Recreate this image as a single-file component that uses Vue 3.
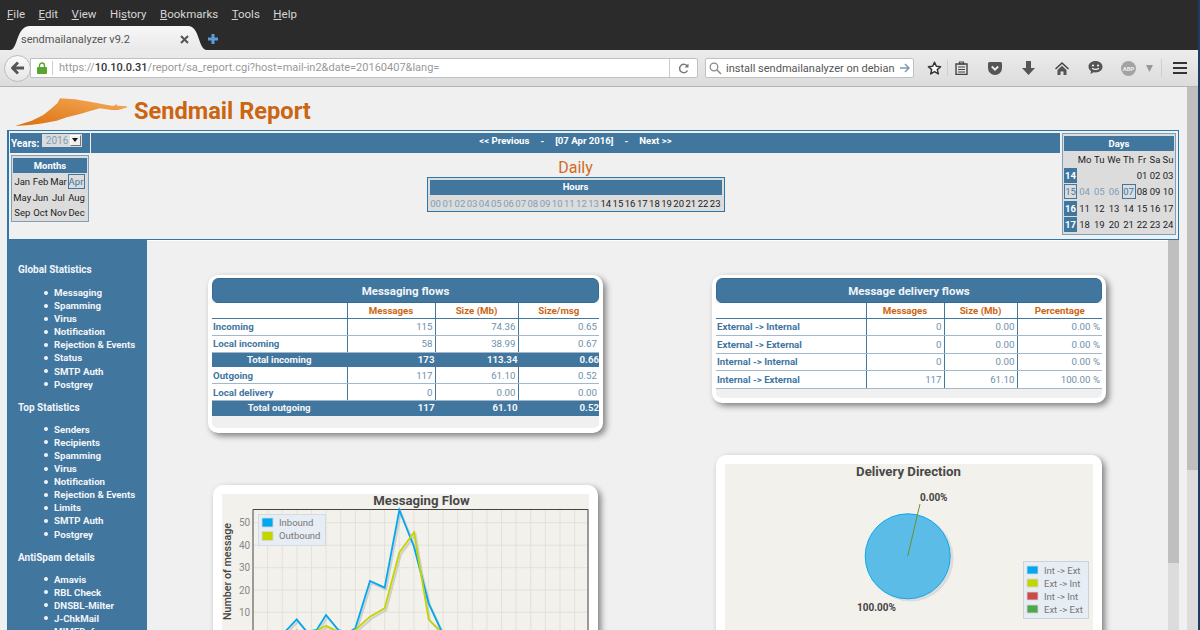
<script setup>
const menus = [
  { b: '', u: 'F', a: 'ile' }, { b: '', u: 'E', a: 'dit' }, { b: '', u: 'V', a: 'iew' },
  { b: 'Hi', u: 's', a: 'tory' }, { b: '', u: 'B', a: 'ookmarks' }, { b: '', u: 'T', a: 'ools' }, { b: '', u: 'H', a: 'elp' }
]
const months = ['Jan', 'Feb', 'Mar', 'Apr', 'May', 'Jun', 'Jul', 'Aug', 'Sep', 'Oct', 'Nov', 'Dec']
const hours = Array.from({ length: 24 }, (_, i) => ({ t: String(i).padStart(2, '0'), link: i < 14 }))
const dayHead = ['', 'Mo', 'Tu', 'We', 'Th', 'Fr', 'Sa', 'Su']
const dayRows = [
  [['14', 'wk'], [''], [''], [''], [''], ['01'], ['02'], ['03']],
  [['15', 'box'], ['04', 'link'], ['05', 'link'], ['06', 'link'], ['07', 'box'], ['08'], ['09'], ['10']],
  [['16', 'wk'], ['11'], ['12'], ['13'], ['14'], ['15'], ['16'], ['17']],
  [['17', 'wk'], ['18'], ['19'], ['20'], ['21'], ['22'], ['23'], ['24']]
]
const nav = [
  { title: 'Global Statistics', items: ['Messaging', 'Spamming', 'Virus', 'Notification', 'Rejection & Events', 'Status', 'SMTP Auth', 'Postgrey'] },
  { title: 'Top Statistics', items: ['Senders', 'Recipients', 'Spamming', 'Virus', 'Notification', 'Rejection & Events', 'Limits', 'SMTP Auth', 'Postgrey'] },
  { title: 'AntiSpam details', items: ['Amavis', 'RBL Check', 'DNSBL-Milter', 'J-ChkMail', 'MIMEDefang'] }
]
const flows = [
  { c: ['Incoming', '115', '74.36', '0.65'] },
  { c: ['Local incoming', '58', '38.99', '0.67'] },
  { c: ['Total incoming', '173', '113.34', '0.66'], total: true },
  { c: ['Outgoing', '117', '61.10', '0.52'] },
  { c: ['Local delivery', '0', '0.00', '0.00'] },
  { c: ['Total outgoing', '117', '61.10', '0.52'], total: true }
]
const delivery = [
  { c: ['External -> Internal', '0', '0.00', '0.00 %'] },
  { c: ['External -> External', '0', '0.00', '0.00 %'] },
  { c: ['Internal -> Internal', '0', '0.00', '0.00 %'] },
  { c: ['Internal -> External', '117', '61.10', '100.00 %'] }
]
const vx = Array.from({ length: 23 }, (_, i) => 205 + (188 + 43.85 * i) / 3)
const hy = [522.7, 545.2, 567.7, 590, 612.3]
const ticks = [['50', 526], ['40', 548.5], ['30', 571], ['20', 593.5], ['10', 615.5]]
const pts = a => a.map(([x, y]) => `${205 + x / 3},${480 + y / 3}`).join(' ')
const inbound = pts([[143, 480], [200, 480], [245, 450], [275, 418], [305, 455], [335, 450], [363, 405], [400, 450], [430, 458], [451, 445], [495, 303], [539, 323], [583, 90], [627, 200], [671, 370], [708, 450], [745, 490]])
const outbound = pts([[143, 490], [230, 480], [275, 450], [305, 470], [335, 452], [363, 437], [400, 455], [430, 462], [451, 450], [495, 410], [539, 385], [583, 218], [627, 157], [671, 418], [708, 455], [745, 495]])
const pieLegend = [['#00a8f0', 'Int -> Ext'], ['#c2d500', 'Ext -> Int'], ['#cb4b4b', 'Int -> Int'], ['#4da74d', 'Ext -> Ext']]
</script>

<template>
  <div class="shot">
    <div class="browser">
      <div class="menubar">
        <span v-for="m in menus" :key="m.u + m.a" class="menu">{{ m.b }}<u>{{ m.u }}</u>{{ m.a }}</span>
      </div>
      <div class="tabbar">
        <div class="tab">
          <span class="tab-title">sendmailanalyzer v9.2</span>
          <svg class="tab-x" width="9" height="9" viewBox="0 0 9 9"><path d="M1 1l7 7M8 1l-7 7" stroke="#555" stroke-width="2"/></svg>
        </div>
        <svg class="tab-new" width="12" height="12" viewBox="0 0 12 12"><path d="M6 1v10M1 6h10" stroke="#5b9bd8" stroke-width="3"/></svg>
      </div>
      <div class="toolbar">
        <div class="back">
          <svg width="14" height="14" viewBox="0 0 14 14"><path d="M7 1.5L1.5 7 7 12.500M2 7h11" fill="none" stroke="#555" stroke-width="2.800"/></svg>
        </div>
        <div class="urlbar">
          <svg class="lock" width="10" height="12" viewBox="0 0 10 12"><path d="M2.500 5V3.500a2.500 2.500 0 0 1 5 0V5" fill="none" stroke="#5aa532" stroke-width="1.400"/><rect y="5" width="10" height="7" rx="1" fill="#5aa532"/></svg>
          <span class="url"><span class="dim">https://</span><b>10.10.0.31</b><span class="dim">/report/sa_report.cgi?host=mail-in2&amp;date=20160407&amp;lang=</span></span>
          <span class="reload">
            <svg width="11" height="11" viewBox="0 0 11 11"><path d="M9.500 3.500A4.200 4.200 0 1 0 9.500 7.500" fill="none" stroke="#777" stroke-width="1.500"/><path d="M10.500 .5v4h-4z" fill="#777"/></svg>
          </span>
        </div>
        <div class="searchbar">
          <svg width="13" height="13" viewBox="0 0 13 13"><circle cx="5" cy="5" r="3.800" fill="none" stroke="#8a8a8a" stroke-width="1.300"/><path d="M8 8l4 4" stroke="#8a8a8a" stroke-width="1.600"/></svg>
          <span class="search-text">install sendmailanalyzer on debian</span>
          <svg width="10" height="10" viewBox="0 0 10 10"><path d="M5 1l4 4-4 4M9 5H0" fill="none" stroke="#7e97ad" stroke-width="1.500"/></svg>
        </div>
        <div class="tools">
          <svg class="i-star" width="15" height="15" viewBox="0 0 15 15"><path d="M7.500 1.300l1.800 4 4.300.4-3.300 2.900 1 4.300-3.800-2.300-3.800 2.300 1-4.300L1.400 5.700l4.300-.4z" fill="#fff" stroke="#333" stroke-width="1.500" stroke-linejoin="round"/></svg>
          <span class="sep"></span>
          <svg class="i-clip" width="13" height="14" viewBox="0 0 13 14"><path d="M1 3h11v10.500H1z" fill="none" stroke="#444" stroke-width="1.400"/><path d="M4.500 1h4v2h-4zM3 6h7M3 8.500h7M3 11h7" fill="none" stroke="#444" stroke-width="1.200"/></svg>
          <svg class="i-pocket" width="14" height="13" viewBox="0 0 14 13"><path d="M1.500 0h11A1.500 1.500 0 0 1 14 1.500V6A7 7 0 0 1 0 6V1.500A1.500 1.500 0 0 1 1.500 0z" fill="#555"/><path d="M3.800 4.500L7 7.700l3.200-3.200" fill="none" stroke="#eee" stroke-width="1.800"/></svg>
          <svg class="i-down" width="13" height="14" viewBox="0 0 13 14"><path d="M4 0h5v7h4l-6.500 7L0 7h4z" fill="#555"/></svg>
          <svg class="i-home" width="14" height="13" viewBox="0 0 14 13"><path d="M7 0L0 6.500l1 1L7 2l6 5.500 1-1z" fill="#444"/><path d="M2.500 8L7 3.800 11.500 8v5H8.500V9.500h-3V13h-3z" fill="#555"/></svg>
          <svg class="i-chat" width="15" height="14" viewBox="0 0 15 14"><path d="M7.500 0C3.400 0 .5 2.500.5 5.700c0 1.900 1 3.400 2.600 4.500L2.500 13l3.200-1.700c.6.100 1.200.1 1.800.1 4.100 0 7-2.500 7-5.700S11.600 0 7.500 0z" fill="#555"/><circle cx="5" cy="4.500" r="1.100" fill="#eee"/><circle cx="10" cy="4.500" r="1.100" fill="#eee"/><path d="M4 7.300c1.800 1.400 5.200 1.400 7 0" fill="none" stroke="#eee" stroke-width="1.100"/></svg>
          <span class="abp">ABP</span>
          <svg class="i-drop" width="7" height="7" viewBox="0 0 7 7"><path d="M0 0h7L3.500 7z" fill="#999"/></svg>
          <span class="sep sep2"></span>
          <svg class="i-burger" width="14" height="12" viewBox="0 0 14 12"><path d="M0 0h14v2H0zM0 5h14v2H0zM0 10h14v2H0z" fill="#333"/></svg>
        </div>
      </div>

      <div class="page">
        <div class="doc">
          <div class="brand">
            <svg class="logo" width="116" height="32" viewBox="0 0 116 32">
              <defs>
                <linearGradient id="lg" x1="0" y1="1" x2="1" y2="0">
                  <stop offset="0" stop-color="#d9700f"/>
                  <stop offset=".55" stop-color="#ea9038"/>
                  <stop offset="1" stop-color="#f6ab5c"/>
                </linearGradient>
              </defs>
              <path d="M0 30L16.700 24.700 28.300 19 36.700 12.300 42.300 7.300 45 2.300 60 3.300 75 5.700 88.300 8.300 98.300 10 101.700 8.300 102.300 9.700 111.700 10.300 112.300 11.300 103.300 14 96.700 14 91.700 13.300 85 12.300 75 15 65 18 51.700 21.300 41.700 24.700 28.300 27.300 15 29z" fill="url(#lg)"/>
            </svg>
            <h1 class="title">Sendmail Report</h1>
          </div>

          <section class="frame">
            <div class="left-col">
              <div class="years">
                <b>Years:</b>
                <span class="select"><span>2016</span><i class="arrow"></i></span>
              </div>
              <div class="months">
                <div class="box-head">Months</div>
                <div class="month-grid">
                  <span v-for="m in months" :key="m" :class="['mo', { sel: m === 'Apr' }]">{{ m }}</span>
                </div>
              </div>
            </div>
            <div class="mid-col">
              <div class="nav-bar">
                <span>&lt;&lt; Previous</span><span>-</span><span>[07 Apr 2016]</span><span>-</span><span>Next &gt;&gt;</span>
              </div>
              <div class="daily">Daily</div>
              <div class="hours">
                <div class="box-head">Hours</div>
                <div class="hour-grid">
                  <span v-for="h in hours" :key="h.t" :class="{ lk: h.link }">{{ h.t }}</span>
                </div>
              </div>
            </div>
            <div class="days">
              <div class="box-head">Days</div>
              <div class="day-grid head-row">
                <span v-for="(d, i) in dayHead" :key="i">{{ d }}</span>
              </div>
              <div v-for="(r, ri) in dayRows" :key="ri" class="day-grid">
                <span v-for="(c, ci) in r" :key="ci" :class="c[1]">{{ c[0] }}</span>
              </div>
            </div>
          </section>

          <section class="main">
            <aside class="sidebar">
              <div v-for="g in nav" :key="g.title" class="group">
                <div class="group-title">{{ g.title }}</div>
                <ul>
                  <li v-for="it in g.items" :key="it">{{ it }}</li>
                </ul>
              </div>
            </aside>

            <div class="content">
              <div class="col col-left">
                <div class="card card-table card-flows">
                  <div class="card-head">Messaging flows</div>
                  <table class="flow t1">
                    <colgroup><col class="c1"><col class="c2"><col class="c3"><col class="c4"></colgroup>
                    <thead><tr><th></th><th>Messages</th><th>Size (Mb)</th><th>Size/msg</th></tr></thead>
                    <tbody>
                      <tr v-for="r in flows" :key="r.c[0]" :class="{ total: r.total }">
                        <td v-for="(c, i) in r.c" :key="i">{{ c }}</td>
                      </tr>
                    </tbody>
                  </table>
                </div>
                <div class="card card-chart chart-l">
                  <svg class="chart" width="368" height="240" viewBox="222 494 368 240">
                    <rect x="222" y="494" width="368" height="240" fill="#f3f1ec"/>
                    <line v-for="x in vx" :key="x" :x1="x" :x2="x" y1="509" y2="734" stroke="#e3e1dc"/>
                    <line v-for="y in hy" :key="y" x1="253" x2="588" :y1="y" :y2="y" stroke="#e3e1dc"/>
                    <path d="M253 640V509.500H588V640" fill="none" stroke="#444"/>
                    <g transform="translate(1.500 2)" fill="none" stroke="#bbb" stroke-width="2" opacity=".6">
                      <polyline :points="inbound"/><polyline :points="outbound"/>
                    </g>
                    <polyline :points="inbound" fill="none" stroke="#00a8f0" stroke-width="1.800"/>
                    <polyline :points="outbound" fill="none" stroke="#c2d500" stroke-width="1.800"/>
                    <rect x="258.500" y="514.500" width="67" height="31" fill="#e6edf4" stroke="#d6dbe2"/>
                    <rect x="262" y="518" width="11" height="9" fill="#00a8f0" stroke="#d8d8d8" stroke-width=".8"/>
                    <rect x="262" y="531.500" width="11" height="9" fill="#c2d500" stroke="#d8d8d8" stroke-width=".8"/>
                    <text x="279" y="526" class="lg">Inbound</text>
                    <text x="279" y="539" class="lg">Outbound</text>
                    <text v-for="t in ticks" :key="t[0]" x="239" :y="t[1]" class="tick">{{ t[0] }}</text>
                    <text x="421.500" y="504.500" class="ct" text-anchor="middle">Messaging Flow</text>
                    <text transform="translate(231 571.500) rotate(-90)" class="yl" text-anchor="middle">Number of message</text>
                  </svg>
                </div>
              </div>

              <div class="col col-right">
                <div class="card card-table">
                  <div class="card-head">Message delivery flows</div>
                  <table class="flow t2">
                    <colgroup><col class="c1"><col class="c2"><col class="c3"><col class="c4"></colgroup>
                    <thead><tr><th></th><th>Messages</th><th>Size (Mb)</th><th>Percentage</th></tr></thead>
                    <tbody>
                      <tr v-for="r in delivery" :key="r.c[0]">
                        <td v-for="(c, i) in r.c" :key="i">{{ c }}</td>
                      </tr>
                    </tbody>
                  </table>
                </div>
                <div class="card card-chart chart-r">
                  <svg class="chart" width="368" height="240" viewBox="725 466 368 240">
                    <rect x="725" y="466" width="368" height="240" fill="#f3f1ec"/>
                    <circle cx="910.500" cy="560.500" r="43" fill="#dddcd8"/>
                    <circle cx="907.700" cy="558.300" r="42.500" fill="#5bbce8" stroke="#0aa8ef"/>
                    <line x1="907.700" y1="558.300" x2="920" y2="506" stroke="#6f8f2a"/>
                    <text x="908.500" y="477.500" class="ct" text-anchor="middle">Delivery Direction</text>
                    <text x="920" y="503" class="pct">0.00%</text>
                    <text x="857" y="613" class="pct">100.00%</text>
                    <rect x="1023.500" y="563.500" width="65" height="57" fill="#e6edf4" stroke="#ccd2da"/>
                    <g v-for="(l, i) in pieLegend" :key="l[1]">
                      <rect x="1027" :y="568 + i * 13" width="11" height="8" :fill="l[0]" stroke="#d8d8d8" stroke-width=".8"/>
                      <text x="1044" :y="576 + i * 13" class="lg">{{ l[1] }}</text>
                    </g>
                  </svg>
                </div>
              </div>
            </div>

            <div class="inner-scroll"><div class="inner-thumb"></div></div>
          </section>
        </div>
        <div class="page-scroll"><div class="page-thumb"></div></div>
      </div>
    </div>
    <div class="desktop"></div>
  </div>
</template>

<style>
html, body { margin: 0; padding: 0; background: #f0f0f0; }
</style>

<style scoped>
* { box-sizing: border-box; }
.shot { width: 1200px; height: 630px; display: flex; overflow: hidden; font-family: Roboto, "Liberation Sans", sans-serif; background: #f0f0f0; }
.browser { width: 1198px; height: 630px; display: flex; flex-direction: column; flex: none; }
.desktop { flex: 1; background: #1d3c63; }

.menubar { height: 26px; background: #2b2b2b; display: flex; align-items: center; padding: 2px 0 0 7px; color: #d6d6d6; font-size: 11.500px; flex: none; }
.menu { margin-right: 13.500px; }
.tabbar { height: 24px; background: #2b2b2b; display: flex; align-items: flex-end; padding-left: 10px; flex: none; position: relative; }
.tab { width: 197px; height: 24px; display: flex; align-items: center; padding: 2px 0 0 11px; background: linear-gradient(#f7f7f7, #e9e9e9); clip-path: path('M0 24C8 24 6 0 20 0H178C190 0 188 24 197 24Z'); }
.tab-title { font-size: 11px; color: #555; width: 159px; }
.tab-new { margin: 0 0 5px 0; }

.toolbar { height: 37px; flex: none; background: linear-gradient(#ececec, #dcdcdc); border-bottom: 1px solid #b4b4b4; display: flex; align-items: center; padding-left: 4px; }
.back { width: 27px; height: 27px; border-radius: 50%; background: linear-gradient(#fafafa, #e6e6e6); border: 1px solid #b5bcc6; display: flex; align-items: center; justify-content: center; flex: none; z-index: 1; }
.urlbar { width: 668px; height: 20px; margin-left: -1px; background: #fff; border: 1px solid #c0c0c0; border-radius: 0 2px 2px 0; display: flex; align-items: center; padding-left: 6px; flex: none; }
.lock { flex: none; }
.url { font-size: 11px; margin-left: 5px; padding-left: 6px; border-left: 1px solid #ccc; width: 617px; flex: none; white-space: nowrap; line-height: 14px; }
.url b { font-weight: 500; color: #333; }
.dim { color: #999; }
.reload { border-left: 1px solid #ccc; height: 18px; flex: 1; display: flex; align-items: center; justify-content: center; }
.searchbar { width: 209px; height: 20px; margin-left: 7px; background: #fff; border: 1px solid #c0c0c0; border-radius: 2px; display: flex; align-items: center; padding: 0 3px 0 3px; flex: none; }
.search-text { font-size: 11px; color: #555; margin-left: 4px; flex: 1; white-space: nowrap; }
.tools { display: flex; align-items: center; height: 100%; flex: none; }
.i-star { margin-left: 13px; }
.sep { width: 1px; height: 16px; background: #cfcfcf; margin-left: 5px; }
.i-clip { margin-left: 7px; }
.i-pocket { margin-left: 20px; }
.i-down { margin-left: 20px; }
.i-home { margin-left: 20px; }
.i-chat { margin-left: 19px; }
.abp { width: 15px; height: 15px; border-radius: 50%; background: #a3a3a3; color: #eee; font-size: 6px; font-weight: 700; display: flex; align-items: center; justify-content: center; margin-left: 18px; }
.i-drop { margin-left: 10px; }
.sep2 { margin-left: 8px; height: 18px; }
.i-burger { margin-left: 11px; }

.page { flex: 1; min-height: 0; display: flex; background: #f0f0f0; overflow: hidden; }
.doc { width: 1189px; flex: none; padding-left: 7px; }
.page-scroll { width: 11px; flex: none; margin-left: -2px; background: #dcdcdc; }
.page-thumb { height: 383px; background: #bfbfbf; }

.brand { height: 43px; display: flex; position: relative; align-items: flex-start; }
.logo { margin: 9px 0 0 8px; flex: none; }
.title { margin: 10px 0 0 3px; font-size: 23.600px; line-height: 28px; font-weight: 700; color: #cc6512; white-space: nowrap; }

.frame { height: 110px; width: 1172px; border: 1px solid #2f77a8; border-left-width: 2px; margin-top: 0; display: flex; padding: 2px 2px 0 1px; background: #f0f0f0; }
.left-col { width: 80px; flex: none; }
.years { height: 20px; background: #41769f; color: #fff; font-size: 10px; display: flex; align-items: center; padding-left: 1px; }
.years b { font-weight: 700; }
.select { width: 40px; height: 13px; margin-left: 3px; margin-top: -6px; background: #dcdcdc; color: #7f9fb8; display: flex; align-items: center; justify-content: flex-end; font-size: 10px; padding-right: 1px; }
.select span { margin-right: 2px; }
.arrow { width: 11px; height: 11px; background: #f0f0f0; border: 1px solid #777; border-top-color: #fff; border-left-color: #fff; position: relative; display: block; }
.arrow::after { content: ""; position: absolute; left: 1px; top: 2px; border: 3.500px solid transparent; border-top: 4px solid #111; border-bottom: 0; }
.months { margin: 2px 0 0 1px; width: 78px; height: 67px; background: #dcdcdc; border: 1px solid #7f9fb8; padding: 2px 1px; }
.box-head { background: #41769f; color: #fff; font-size: 9.500px; font-weight: 700; text-align: center; height: 15px; line-height: 15px; }
.month-grid { display: grid; grid-template-columns: 18.500px 18px 18px 18px; grid-template-rows: 15px 17px 14px; margin-top: 1px; font-size: 9.500px; color: #222; text-align: center; align-items: center; }
.mo { line-height: 14px; white-space: nowrap; }
.mo.sel { border: 1px solid #41769f; color: #41769f; height: 15px; width: 17px; line-height: 14px; overflow: hidden; }

.mid-col { width: 969px; flex: none; margin-left: 1px; display: flex; flex-direction: column; align-items: center; }
.nav-bar { width: 100%; height: 20px; background: #41769f; color: #fff; font-size: 9.600px; font-weight: 700; display: flex; justify-content: center; gap: 11px; padding-top: 2px; line-height: 12px; }
.daily { font-size: 16px; color: #cf6d1f; line-height: 20px; margin-top: 5px; height: 19px; }
.hours { width: 298px; height: 35px; background: #dcdcdc; border: 1px solid #2f77a8; padding: 2px; }
.hours .box-head { height: 15px; border: 1px solid #41769f; line-height: 12px; }
.hour-grid { display: grid; grid-template-columns: repeat(24, 12.167px); font-size: 9.500px; color: #222; line-height: 15px; margin-top: 1px; text-align: center; }
.lk { color: #7f9fb8; }

.days { width: 114px; height: 102px; margin-left: 2px; flex: none; background: #dcdcdc; border: 1px solid #7f9fb8; padding: 2px 1px; font-size: 9.500px; color: #222; }
.day-grid { display: grid; grid-template-columns: 13px 15px 14.500px 15px 14px 13px 13px 13px; height: 16.500px; align-items: center; text-align: center; white-space: nowrap; }
.head-row { margin-top: 0; height: 16px; }
.day-grid .wk { background: #41769f; color: #fff; font-weight: 700; height: 15px; line-height: 15px; }
.day-grid .box { border: 1px solid #41769f; color: #41769f; height: 15px; line-height: 13px; }
.day-grid .link { color: #7f9fb8; }

.main { height: 390px; width: 1172px; display: flex; overflow: hidden; }
.sidebar { width: 140px; flex: none; height: 420px; background: #41769f; border-left: 1px solid #2f77a8; color: #f2f5f8; font-size: 9.700px; font-weight: 700; padding: 23px 0 0 10px; }
.group { margin-bottom: 10px; }
.group-title { line-height: 13px; }
.sidebar ul { margin: 9px 0 0; padding: 0 0 0 36px; list-style: none; }
.group:first-child ul { margin-top: 10px; }
.sidebar li { line-height: 13.100px; white-space: nowrap; display: flex; align-items: center; }
.sidebar li::before { content: ""; width: 4px; height: 4px; border-radius: 50%; background: #f2f5f8; margin: 0 6px 0 -10px; flex: none; }
.group-title { font-size: 10px; }

.content { width: 1021px; flex: none; display: flex; height: 420px; border-top: 1px solid #fff; }
.col { flex: none; display: flex; flex-direction: column; }
.col-left { width: 395px; margin-left: 61px; }
.col-right { width: 394px; margin-left: 109px; }
.card { background: #f0f0f0; border: solid #fff; border-radius: 10px; box-shadow: 3px 3px 6px #808080; overflow: hidden; flex: none; }
.card-table { margin-top: 34px; border-width: 3px 4px 5px 4px; padding-bottom: 9px; }
.card-flows { padding-bottom: 12px; }
.card-head { height: 25px; background: #41769f; border: 1px solid #2f6c99; border-radius: 6px; color: #f2f5f8; font-size: 11.500px; font-weight: 700; text-align: center; line-height: 24px; }
.flow { border-collapse: collapse; table-layout: fixed; width: 100%; background: #fff; font-size: 9.700px; }
.t1 .c1 { width: 135px; } .t1 .c2 { width: 88px; } .t1 .c3 { width: 83px; }
.t2 .c1 { width: 150px; } .t2 .c2 { width: 78px; } .t2 .c3 { width: 73px; }
.flow th { height: 15px; color: #cc6512; font-weight: 700; font-size: 9.700px; padding: 0; border-left: 1px solid #41769f; border-bottom: 1px solid #41769f; }
.flow th:first-child { border-left: 0; }
.flow td { height: 17.500px; padding: 0 2px; text-align: right; color: #6f90ab; border-left: 1px solid #41769f; border-bottom: 1px solid #a3b8ca; }
.t1 td { height: 17px; }
.flow td:first-child { text-align: left; border-left: 0; color: #41769f; font-weight: 700; padding-left: 1px; }
.flow tr.total td { height: 14.500px; background: #41769f; color: #f5f7f9; font-weight: 700; border-left-color: #41769f; border-bottom-color: #41769f; padding: 0; }
.flow tr.total td:first-child { text-align: center; }
.card-chart { margin-top: 52px; border-width: 9px; width: 386px; height: 260px; }
.chart-l { margin-left: 5px; width: 385px; }
.chart-r { margin-left: 4px; }
.chart { display: block; font-family: Roboto, "Liberation Sans", sans-serif; }
.lg { font-size: 9.500px; fill: #777; }
.tick { font-size: 10px; fill: #888; }
.ct { font-size: 13.200px; font-weight: 700; fill: #484848; }
.yl { font-size: 10.700px; font-weight: 500; fill: #444; }
.pct { font-size: 10px; font-weight: 700; fill: #444; }

.inner-scroll { width: 11px; flex: none; background: #dcdcdc; height: 420px; }
.inner-thumb { height: 323px; background: #bfbfbf; }
</style>
